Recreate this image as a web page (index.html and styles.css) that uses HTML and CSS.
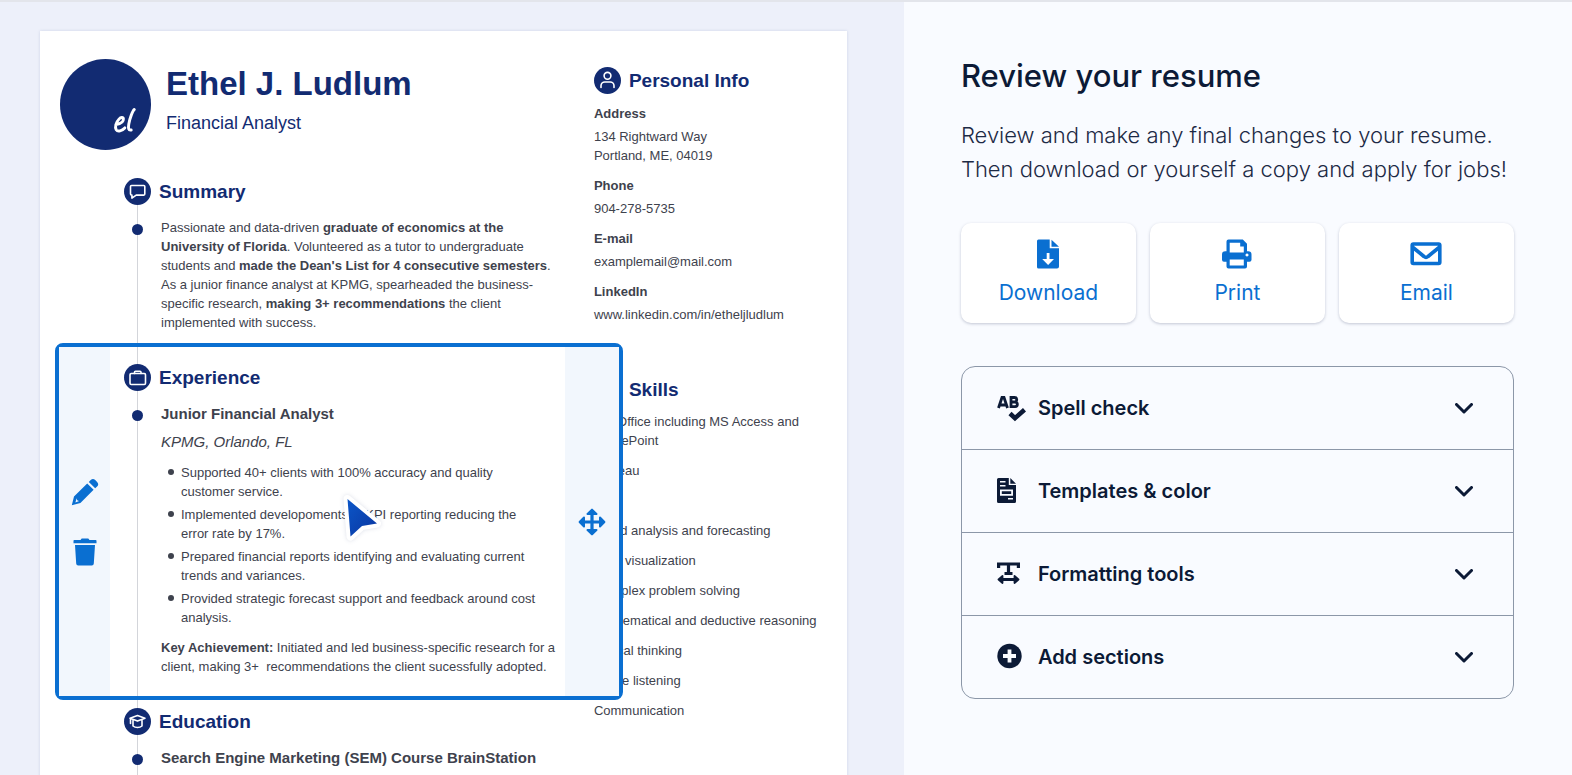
FILE: index.html
```html
<!DOCTYPE html>
<html lang="en">
<head>
<meta charset="utf-8">
<meta name="viewport" content="width=device-width, initial-scale=1">
<title>Review your resume</title>
<link rel="stylesheet" href="styles.css">
</head>
<body>
<div class="app">
  <section class="preview" aria-label="Resume preview">
    <article class="paper">
      <div class="main">
        <header class="profile">
          <svg class="avatar" viewBox="0 0 91 91" role="img" aria-label="el monogram">
            <circle cx="45.5" cy="45.5" r="45.5" fill="#122b72"/>
            <g fill="none" stroke="#fff" stroke-width="2.9" stroke-linecap="round" stroke-linejoin="round">
              <path d="M56 65.500c4-.6 7.600-2.600 7.400-5.600-.2-2-2.600-1.800-4.400.2-3 3.200-4.400 8-2.800 10.600 1.600 2.400 5.800 1.200 8.600-1.800"/>
              <path d="M74.300 50.500c-1.600 1.200-4.600 9-5.500 14.500-.7 4-.4 6.600 2.400 6"/>
            </g>
          </svg>
          <div class="identity">
            <h1 class="name">Ethel J. Ludlum</h1>
            <p class="role">Financial Analyst</p>
          </div>
        </header>

        <section class="section">
          <div class="section-head">
            <span class="badge"><svg viewBox="0 0 27 27" aria-hidden="true"><path d="M7.500 7.500h12.300a1 1 0 0 1 1 1v7.600a1 1 0 0 1-1 1h-7.600l-4.300 3v-3h-.4a1 1 0 0 1-1-1V8.500a1 1 0 0 1 1-1z"/></svg></span>
            <h2>Summary</h2>
          </div>
          <div class="entry">
            <span class="dot"></span>
            <p class="text">Passionate and data-driven <b>graduate of economics at the<br>University of Florida</b>. Volunteered as a tutor to undergraduate<br>students and <b>made the Dean's List for 4 consecutive semesters</b>.<br>As a junior finance analyst at KPMG, spearheaded the business-<br>specific research, <b>making 3+ recommendations</b> the client<br>implemented with success.</p>
          </div>
        </section>

        <section class="section selected">
          <div class="tools">
            <button class="tool" type="button" aria-label="Edit section">
              <svg width="28" height="28" viewBox="0 0 28 28" fill="#0a6fd1" aria-hidden="true"><path d="M.800 27.300 3 18.500 16.200 5.400l6.400 6.400L9.400 25zM17.800 3.900l1.900-1.900a3.200 3.200 0 0 1 4.500 0l1.900 1.900a3.200 3.200 0 0 1 0 4.500l-1.900 1.900z"/><path d="M5.600 20.300c.1 1.600.9 2.500 2.600 2.800l-3.800 1.300z" fill="#f2f7fd"/></svg>
            </button>
            <button class="tool" type="button" aria-label="Delete section">
              <svg width="24" height="28" viewBox="0 0 24 28" fill="#0a6fd1" aria-hidden="true"><path d="M7.500 2 8.700.600h6.600L16.500 2h6.200a.8.8 0 0 1 .8.8v2.400H.500V2.800A.8.8 0 0 1 1.300 2zM2 7h20l-1.200 18.600a2 2 0 0 1-2 1.900H5.200a2 2 0 0 1-2-1.900z"/></svg>
            </button>
          </div>
          <div class="selected-body">
            <div class="section-head">
              <span class="badge"><svg viewBox="0 0 27 27" aria-hidden="true"><rect x="6" y="9.500" width="15.500" height="11" rx="1.200"/><path d="M10.500 9.500V8.200a1 1 0 0 1 1-1h4.500a1 1 0 0 1 1 1v1.300"/></svg></span>
              <h2>Experience</h2>
            </div>
            <div class="entry">
              <span class="dot"></span>
              <div class="text">
                <h3>Junior Financial Analyst</h3>
                <p class="place">KPMG, Orlando, FL</p>
                <ul class="duties">
                  <li><span>Supported 40+ clients with 100% accuracy and quality<br>customer service.</span></li>
                  <li><span>Implemented developoments in KPI reporting reducing the<br>error rate by 17%.</span></li>
                  <li><span>Prepared financial reports identifying and evaluating current<br>trends and variances.</span></li>
                  <li><span>Provided strategic forecast support and feedback around cost<br>analysis.</span></li>
                </ul>
                <p><b>Key Achievement:</b> Initiated and led business-specific research for a<br>client, making 3+&nbsp; recommendations the client sucessfully adopted.</p>
              </div>
            </div>
          </div>
          <div class="tools">
            <button class="tool" type="button" aria-label="Move section">
              <svg width="28" height="28" viewBox="0 0 28 28" fill="#0a6fd1" stroke="#0a6fd1" stroke-width="3.200" stroke-linecap="round" stroke-linejoin="round" aria-hidden="true"><path d="M14 3v22M3 14h22"/><path stroke-width="2" d="M9.500 6 14 1.600 18.500 6zM9.500 22l4.500 4.400 4.500-4.400zM6 9.500 1.600 14 6 18.500zM22 9.500l4.400 4.500-4.400 4.500z"/></svg>
            </button>
          </div>
          <svg class="cursor" viewBox="0 0 46 50" aria-hidden="true">
            <defs><linearGradient id="c" x1="0" y1="0" x2="1" y2="1"><stop offset="0" stop-color="#0b56c8"/><stop offset="1" stop-color="#0a36a0"/></linearGradient></defs>
            <path d="M7.500 5 37 29.500 22 32 10.500 42.500z" fill="url(#c)" stroke="#fff" stroke-width="8" stroke-linejoin="round" paint-order="stroke"/>
          </svg>
        </section>

        <section class="section education">
          <div class="section-head">
            <span class="badge"><svg viewBox="0 0 27 27" aria-hidden="true"><path d="m13.500 7.500 7.500 2.800-7.500 2.800L6 10.300zM9 12.500v5.500c2.400 2 6.600 2 9 0v-5.500M6.500 11v4.500"/></svg></span>
            <h2>Education</h2>
          </div>
          <div class="entry">
            <span class="dot"></span>
            <div class="text"><h3>Search Engine Marketing (SEM) Course BrainStation</h3></div>
          </div>
        </section>
      </div>

      <aside class="side">
        <section>
          <div class="section-head">
            <span class="badge"><svg viewBox="0 0 27 27" aria-hidden="true"><circle cx="13.500" cy="8.800" r="3.400"/><path d="M7 20.500v-1.700a3.800 3.800 0 0 1 3.800-3.800h5.400a3.800 3.800 0 0 1 3.800 3.800v1.700"/></svg></span>
            <h2>Personal Info</h2>
          </div>
          <dl class="contact">
            <dt>Address</dt><dd>134 Rightward Way<br>Portland, ME, 04019</dd>
            <dt>Phone</dt><dd>904-278-5735</dd>
            <dt>E-mail</dt><dd>examplemail@mail.com</dd>
            <dt>LinkedIn</dt><dd>www.linkedin.com/in/etheljludlum</dd>
          </dl>
        </section>
        <section class="skills">
          <div class="section-head">
            <span class="badge"></span>
            <h2>Skills</h2>
          </div>
          <ul class="skill-list">
            <li>MS Office including MS Access and<br>SharePoint</li>
            <li>Tableau</li>
            <li>SQL</li>
            <li>Trend analysis and forecasting</li>
            <li>Data visualization</li>
            <li>Complex problem solving</li>
            <li>Mathematical and deductive reasoning</li>
            <li>Critical thinking</li>
            <li>Active listening</li>
            <li>Communication</li>
          </ul>
        </section>
      </aside>
    </article>
  </section>

  <section class="panel">
    <h2 class="panel-title">Review your resume</h2>
    <p class="panel-text">Review and make any final changes to your resume.<br>Then download or yourself a copy and apply for jobs!</p>

    <div class="actions">
      <button class="action" type="button">
        <svg width="30" height="30" viewBox="0 0 30 30" fill="#0a6fd1" aria-hidden="true"><path fill-rule="evenodd" d="M5.500.500h11.200v8.700H26v18.300a2 2 0 0 1-2 2H5.500a1.500 1.500 0 0 1-1.500-1.500V2A1.500 1.500 0 0 1 5.500.500zM13.700 14v6H9.200l5.900 6 5.900-6h-4.500v-6z"/><path d="M18.500.700 26 7.800h-7.500z"/></svg>
        Download
      </button>
      <button class="action" type="button">
        <svg width="30" height="30" viewBox="0 0 30 30" fill="#0a6fd1" aria-hidden="true"><path fill-rule="evenodd" d="M6.500.500h14.300l4.200 4.300v7.400h1.200a3.300 3.300 0 0 1 3.300 3.300v5.300a2 2 0 0 1-2 2H25v4.700a2 2 0 0 1-2 2H6.500a2 2 0 0 1-2-2v-4.700H2a2 2 0 0 1-2-2v-5.300a3.300 3.300 0 0 1 3.300-3.300h1.200V2.500a2 2 0 0 1 2-2zM7.700 3.700v9.800h14.100V7.500h-3.600V3.700zM7.700 20.500v6h14.100v-6zM25 14.500a1.500 1.500 0 1 0 .01 0z"/></svg>
        Print
      </button>
      <button class="action" type="button">
        <svg width="32" height="30" viewBox="0 0 32 30" fill="none" stroke="#0a6fd1" stroke-width="3.600" stroke-linejoin="round" aria-hidden="true"><rect x="2.200" y="5" width="27.600" height="19.500" rx="1.200"/><path d="m3 8.500 11 9a3 3 0 0 0 4 0l11-9"/></svg>
        Email
      </button>
    </div>

    <div class="accordion">
      <button class="row" type="button" aria-expanded="false">
        <svg class="row-icon" viewBox="0 0 30 30" fill="none" stroke="#0c1a36" stroke-width="3" aria-hidden="true"><path d="M1.500 15 5 4.500h2L10.500 15M3 12h6M14 4.500V13.700h4a2.300 2.300 0 0 0 0-4.700h-4 3.500a2.200 2.200 0 0 0 0-4.500z" stroke-width="2.800"/><path d="m13 20.500 5 4.700 9.500-8.500" stroke-width="4.500"/></svg>
        <span>Spell check</span>
        <svg class="chevron" viewBox="0 0 18 11" aria-hidden="true"><path d="m1.500 1.500 7.500 7.500 7.500-7.500"/></svg>
      </button>
      <button class="row" type="button" aria-expanded="false">
        <svg class="row-icon" viewBox="0 0 30 30" fill="#0c1a36" aria-hidden="true"><path fill-rule="evenodd" d="M1.500 2h10.300v7H19v16.500a1.500 1.500 0 0 1-1.500 1.500h-16A1.500 1.500 0 0 1 0 25.500v-22A1.500 1.500 0 0 1 1.500 2zM3 5v1.500h5.500V5zM3 9v1.500h5.500V9zM3 13.500v6.300h13v-6.300zM4.800 15.300h9.400v2.700H4.800zM11 22v1.600h5V22z"/><path d="M13.300 2 19 7.800h-5.700z"/></svg>
        <span>Templates &amp; color</span>
        <svg class="chevron" viewBox="0 0 18 11" aria-hidden="true"><path d="m1.500 1.500 7.500 7.500 7.500-7.500"/></svg>
      </button>
      <button class="row" type="button" aria-expanded="false">
        <svg class="row-icon" viewBox="0 0 30 30" fill="none" stroke="#0c1a36" stroke-width="3.200" aria-hidden="true"><path d="M1.600 9V5h19.800v4M11.500 5v9.500M7.500 14.500h8M3.500 20.500h16"/><path d="m5.500 17-4 3.500 4 3.500zM17.500 17l4 3.500-4 3.500z" fill="#0c1a36" stroke-width="1.800" stroke-linejoin="round"/></svg>
        <span>Formatting tools</span>
        <svg class="chevron" viewBox="0 0 18 11" aria-hidden="true"><path d="m1.500 1.500 7.500 7.500 7.500-7.500"/></svg>
      </button>
      <button class="row" type="button" aria-expanded="false">
        <svg class="row-icon" viewBox="0 0 30 30" aria-hidden="true"><circle cx="12.500" cy="14" r="12.200" fill="#0c1a36"/><path d="M12.500 7.500v13M6 14h13" stroke="#f9fbff" stroke-width="3.800"/></svg>
        <span>Add sections</span>
        <svg class="chevron" viewBox="0 0 18 11" aria-hidden="true"><path d="m1.500 1.500 7.500 7.500 7.500-7.500"/></svg>
      </button>
    </div>
  </section>
</div>
</body>
</html>
```
FILE: styles.css
```css
* {
  box-sizing: border-box;
}

body,
h1,
h2,
h3,
p,
ul,
dl,
dd {
  margin: 0;
  padding: 0;
}

button {
  margin: 0;
  border: 0;
  background: none;
  font: inherit;
  color: inherit;
  cursor: pointer;
}

.app {
  display: grid;
  grid-template-columns: 57.5% minmax(0, 1fr);
  height: 100vh;
  overflow: hidden;
  border-top: 2px solid #e3e5eb;
}

/* Resume preview */

.preview {
  padding: 29px 57px 0 40px;
  overflow: hidden;
  background: #edf0fa;
  font-family: "Liberation Sans", Arial, sans-serif;
}

.paper {
  display: grid;
  grid-template-columns: minmax(0, 539fr) minmax(0, 253fr);
  min-height: 100%;
  padding-left: 15px;
  background: #fff;
  box-shadow: 0 0 3px rgba(30, 50, 110, 0.14);
  color: #3e424d;
  font-size: 13px;
  line-height: 19px;
}

.main {
  display: flex;
  flex-direction: column;
  padding-top: 28px;
}

.profile {
  display: flex;
  gap: 15px;
  padding: 0 0 28px 5px;
  color: #122b72;
}

.avatar {
  flex: none;
  width: 91px;
  height: 91px;
}

.identity {
  display: flex;
  flex-direction: column;
  gap: 7px;
  padding-top: 5px;
}

.name {
  font-size: 33px;
  line-height: 40px;
}

.role {
  font-size: 18px;
  line-height: 24px;
}

.section {
  position: relative;
  padding: 0 0 11px 69px;
}

/* Vertical timeline rule, centred under the badges */
.section::before {
  content: "";
  position: absolute;
  top: 0;
  bottom: 0;
  left: 82px;
  width: 1px;
  background: #d3d5da;
}

.section-head {
  display: flex;
  align-items: center;
  gap: 8px;
}

.section-head h2 {
  color: #122b72;
  font-size: 19px;
  line-height: 27px;
}

.badge {
  position: relative;
  flex: none;
  width: 27px;
  height: 27px;
  border-radius: 50%;
  background: #122b72;
}

.badge svg {
  display: block;
  fill: none;
  stroke: #fff;
  stroke-width: 1.6;
  stroke-linejoin: round;
  stroke-linecap: round;
}

.entry {
  display: flex;
  gap: 18px;
  padding: 13px 0 0 8px;
}

.dot {
  position: relative;
  flex: none;
  width: 11px;
  height: 11px;
  margin-top: 6px;
  border-radius: 50%;
  background: #122b72;
}

.text {
  white-space: nowrap;
}

.text h3 {
  font-size: 15px;
  line-height: 20px;
}

.selected {
  z-index: 1;
  display: grid;
  grid-template-columns: 51px minmax(0, 1fr) 54px;
  margin-right: -29px;
  padding: 0;
  border: 4px solid #0a6fd1;
  border-radius: 8px;
  background: #fff;
}

.selected::before {
  left: 78px;
}

.selected-body {
  padding: 17px 0 20px 14px;
}

.tools {
  display: flex;
  flex-direction: column;
  align-items: center;
  justify-content: center;
  gap: 32px;
  background: #f2f7fd;
}

.tool {
  display: flex;
  padding: 0;
}

.place {
  padding: 8px 0 11px;
  font-size: 15px;
  font-style: italic;
  line-height: 20px;
}

.duties {
  display: flex;
  flex-direction: column;
  gap: 4px;
  padding: 0 0 11px 7px;
  list-style: none;
}

.duties li {
  display: flex;
  gap: 7px;
}

.duties li::before {
  content: "";
  flex: none;
  width: 6px;
  height: 6px;
  margin-top: 6px;
  border-radius: 50%;
  background: #3e424d;
}

.cursor {
  position: absolute;
  top: 147px;
  left: 281px;
  width: 46px;
  height: 50px;
  filter: drop-shadow(0 0 2px rgba(30, 50, 110, 0.15));
}

.education {
  flex: 1;
  padding-top: 8px;
}

.side {
  padding-top: 36px;
  white-space: nowrap;
}

.contact {
  padding-top: 10px;
}

.contact dt {
  font-weight: 700;
}

.contact dd {
  padding: 4px 0 11px;
}

.skills {
  padding-top: 41px;
}

.skill-list {
  display: flex;
  flex-direction: column;
  gap: 11px;
  padding-top: 9px;
  list-style: none;
}

/* Review panel */

.panel {
  padding: 53px 58px 0 57px;
  background: #f9fbff;
  color: #0c1a36;
  font-family: Inter, sans-serif;
}

.panel-title {
  font-size: 31px;
  font-weight: 500;
  line-height: 41px;
}

.panel-text {
  padding-top: 22px;
  color: #1d2a45;
  font-size: 22px;
  font-weight: 300;
  line-height: 34px;
  white-space: nowrap;
}

.actions {
  display: grid;
  grid-template-columns: repeat(3, minmax(0, 1fr));
  gap: 14px;
  padding-top: 37px;
}

.action {
  display: flex;
  flex-direction: column;
  align-items: center;
  gap: 10px;
  padding: 16px 8px;
  border-radius: 10px;
  background: #fff;
  box-shadow: 0 1px 3px rgba(40, 50, 90, 0.26);
  color: #0a6fd1;
  font-size: 21px;
  line-height: 28px;
}

.accordion {
  margin-top: 43px;
  border: 1px solid #8c97a8;
  border-radius: 14px;
}

.row {
  display: flex;
  align-items: center;
  width: 100%;
  padding: 26px 40px 26px 35px;
  font-size: 20px;
  font-weight: 600;
  line-height: 30px;
  text-align: left;
}

.row + .row {
  border-top: 1px solid #8c97a8;
}

.row span {
  flex: 1;
}

.row-icon {
  flex: none;
  width: 30px;
  height: 30px;
  margin-right: 11px;
}

.chevron {
  flex: none;
  width: 18px;
  height: 11px;
  fill: none;
  stroke: #0c1a36;
  stroke-width: 3;
  stroke-linecap: round;
  stroke-linejoin: round;
}
```
